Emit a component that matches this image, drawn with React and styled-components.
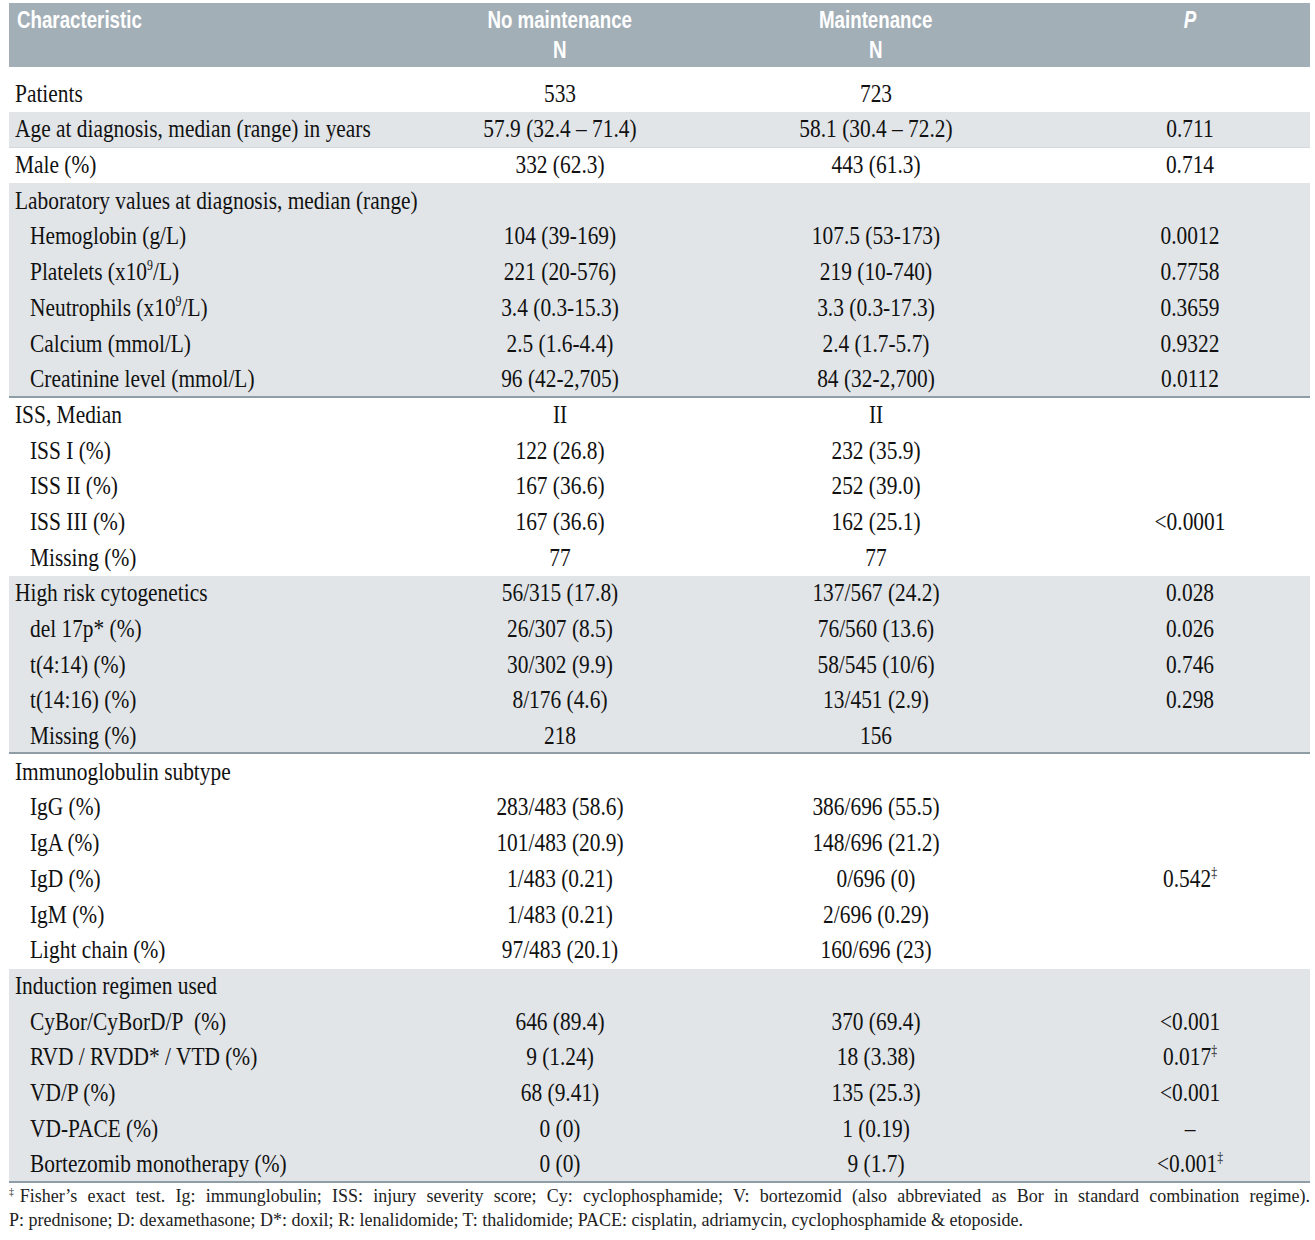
import styled, { createGlobalStyle } from "styled-components"

const GlobalStyle = createGlobalStyle`
  html, body {
    margin: 0;
    padding: 0;
    background: #ffffff;
  }
`

const Page = styled.div`
  width: 1315px;
  padding: 3px 5px 0 9px;
  box-sizing: border-box;
  font-family: "Liberation Serif", "Times New Roman", serif;
  color: #111111;
`

const Table = styled.div`
  display: flex;
  flex-direction: column;
`

const COLS = "396px 310px 322px 1fr"

const HeaderRow = styled.div`
  display: grid;
  grid-template-columns: ${COLS};
  height: 64px;
  background: #a3afb7;
  padding-top: 2px;
  box-sizing: border-box;
`

const HeadCell = styled.div`
  font-family: "Liberation Sans", Arial, sans-serif;
  font-weight: 700;
  font-size: 24px;
  line-height: 30px;
  color: #ffffff;
  text-align: ${(p) => (p.$left ? "left" : "center")};
  padding-left: ${(p) => (p.$left ? "8px" : p.$pad ? "33px" : "0")};
  font-style: ${(p) => (p.$italic ? "italic" : "normal")};
`

// the original header face is a bold condensed grotesque
const Narrow = styled.span`
  display: inline-block;
  transform: scaleX(0.78);
  transform-origin: ${(p) => (p.$left ? "left" : "center")} center;
`

const Group = styled.div`
  background: ${(p) => (p.$shade ? "#e1e5e8" : "#ffffff")};
  box-shadow: ${(p) =>
    p.$rule ? "inset 0 -2px 0 #8f9da6" : p.$soft ? "inset 0 -1px 0 #d3d9dd" : "none"};
`

const Row = styled.div`
  display: grid;
  grid-template-columns: ${COLS};
  align-items: center;
  height: 35.7px;
  padding-top: ${(p) => (p.$lead ? "9.4px" : "0")};
  box-sizing: content-box;
`

const Cell = styled.div`
  font-size: 21.4px;
  line-height: 35px;
  white-space: nowrap;
  text-align: ${(p) => (p.$label ? "left" : "center")};
  padding-left: ${(p) => (p.$label ? (p.$indent ? "21px" : "6px") : p.$pad ? "33px" : "0")};
`

const Tall = styled.span`
  display: inline-block;
  transform: scaleY(1.16);
  transform-origin: center 55%;
`

const Sup = styled.sup`
  font-size: 0.55em;
  line-height: 0;
  vertical-align: 0.75em;
`

const Notes = styled.div`
  padding-top: 1px;
  font-size: 18px;
  line-height: 24.5px;
  color: #222222;
`

const NoteLine = styled.div`
  text-align: ${(p) => (p.$full ? "justify" : "left")};
  text-align-last: ${(p) => (p.$full ? "justify" : "left")};
  white-space: ${(p) => (p.$full ? "normal" : "nowrap")};
`

const x109 = (
  <>
    x10<Sup>9</Sup>/L
  </>
)
const dd = <Sup>‡</Sup>

const groups = [
  {
    lead: true,
    rows: [["Patients", "533", "723", ""]],
  },
  {
    shade: true,
    soft: true,
    rows: [["Age at diagnosis, median (range) in years", "57.9 (32.4 – 71.4)", "58.1 (30.4 – 72.2)", "0.711"]],
  },
  {
    rows: [["Male (%)", "332 (62.3)", "443 (61.3)", "0.714"]],
  },
  {
    shade: true,
    rule: true,
    rows: [
      ["Laboratory values at diagnosis, median (range)", "", "", ""],
      ["Hemoglobin (g/L)", "104 (39-169)", "107.5 (53-173)", "0.0012", true],
      [<>Platelets ({x109})</>, "221 (20-576)", "219 (10-740)", "0.7758", true],
      [<>Neutrophils ({x109})</>, "3.4 (0.3-15.3)", "3.3 (0.3-17.3)", "0.3659", true],
      ["Calcium (mmol/L)", "2.5 (1.6-4.4)", "2.4 (1.7-5.7)", "0.9322", true],
      ["Creatinine level (mmol/L)", "96 (42-2,705)", "84 (32-2,700)", "0.0112", true],
    ],
  },
  {
    rows: [
      ["ISS, Median", "II", "II", ""],
      ["ISS I (%)", "122 (26.8)", "232 (35.9)", "", true],
      ["ISS II (%)", "167 (36.6)", "252 (39.0)", "", true],
      ["ISS III (%)", "167 (36.6)", "162 (25.1)", "<0.0001", true],
      ["Missing (%)", "77", "77", "", true],
    ],
  },
  {
    shade: true,
    rule: true,
    rows: [
      ["High risk cytogenetics", "56/315 (17.8)", "137/567 (24.2)", "0.028"],
      ["del 17p* (%)", "26/307 (8.5)", "76/560 (13.6)", "0.026", true],
      ["t(4:14) (%)", "30/302 (9.9)", "58/545 (10/6)", "0.746", true],
      ["t(14:16) (%)", "8/176 (4.6)", "13/451 (2.9)", "0.298", true],
      ["Missing (%)", "218", "156", "", true],
    ],
  },
  {
    rows: [
      ["Immunoglobulin subtype", "", "", ""],
      ["IgG (%)", "283/483 (58.6)", "386/696 (55.5)", "", true],
      ["IgA (%)", "101/483 (20.9)", "148/696 (21.2)", "", true],
      ["IgD (%)", "1/483 (0.21)", "0/696 (0)", <>0.542{dd}</>, true],
      ["IgM (%)", "1/483 (0.21)", "2/696 (0.29)", "", true],
      ["Light chain (%)", "97/483 (20.1)", "160/696 (23)", "", true],
    ],
  },
  {
    shade: true,
    rule: true,
    rows: [
      ["Induction regimen used", "", "", ""],
      ["CyBor/CyBorD/P\u00a0 (%)", "646 (89.4)", "370 (69.4)", "<0.001", true],
      ["RVD / RVDD* / VTD (%)", "9 (1.24)", "18 (3.38)", <>0.017{dd}</>, true],
      ["VD/P (%)", "68 (9.41)", "135 (25.3)", "<0.001", true],
      ["VD-PACE (%)", "0 (0)", "1 (0.19)", "–", true],
      ["Bortezomib monotherapy (%)", "0 (0)", "9 (1.7)", <>{"<0.001"}{dd}</>, true],
    ],
  },
]

const App = () => {
  return (
    <Page>
      <GlobalStyle />
      <Table>
        <HeaderRow>
          <HeadCell $left>
            <Narrow $left>Characteristic</Narrow>
          </HeadCell>
          <HeadCell>
            <Narrow>
              No maintenance
              <br />N
            </Narrow>
          </HeadCell>
          <HeadCell>
            <Narrow>
              Maintenance
              <br />N
            </Narrow>
          </HeadCell>
          <HeadCell $pad $italic>
            <Narrow>P</Narrow>
          </HeadCell>
        </HeaderRow>

        {groups.map((g, gi) => (
          <Group key={gi} $shade={g.shade} $rule={g.rule} $soft={g.soft}>
            {g.rows.map(([label, a, b, p, indent], ri) => (
              <Row key={ri} $lead={g.lead && ri === 0}>
                <Cell $label $indent={indent}>
                  <Tall>{label}</Tall>
                </Cell>
                <Cell>
                  <Tall>{a}</Tall>
                </Cell>
                <Cell>
                  <Tall>{b}</Tall>
                </Cell>
                <Cell $pad>
                  <Tall>{p}</Tall>
                </Cell>
              </Row>
            ))}
          </Group>
        ))}
      </Table>

      <Notes>
        <NoteLine $full>
          <Sup>‡</Sup>Fisher’s exact test. Ig: immunglobulin; ISS: injury severity score; Cy: cyclophosphamide; V:
          bortezomid (also abbreviated as Bor in standard combination regime).
        </NoteLine>
        <NoteLine>
          P: prednisone; D: dexamethasone; D*: doxil; R: lenalidomide; T: thalidomide; PACE: cisplatin, adriamycin,
          cyclophosphamide &amp; etoposide.
        </NoteLine>
      </Notes>
    </Page>
  )
}

export default App
